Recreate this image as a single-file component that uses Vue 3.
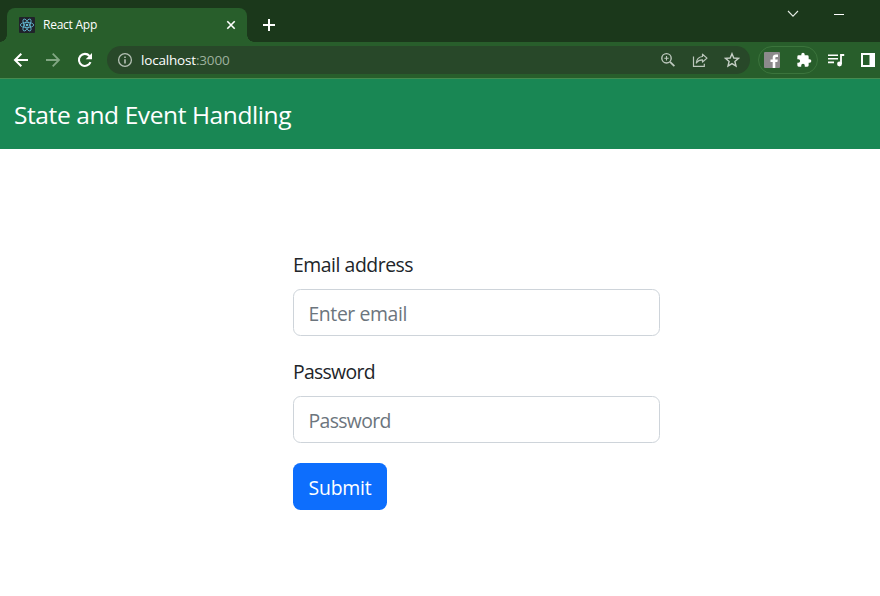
<script setup>
import { ref } from 'vue'

const email = ref('')
const password = ref('')
</script>

<template>
  <div class="window">
    <div class="tabstrip">
      <div class="tab">
        <svg class="favicon" width="16" height="16" viewBox="0 0 16 16">
          <rect width="16" height="16" rx="1" fill="#20232a" />
          <g fill="none" stroke="#61b9d3" stroke-width="0.85">
            <ellipse cx="8" cy="8" rx="6.7" ry="2.6" />
            <ellipse cx="8" cy="8" rx="6.7" ry="2.6" transform="rotate(60 8 8)" />
            <ellipse cx="8" cy="8" rx="6.7" ry="2.6" transform="rotate(120 8 8)" />
          </g>
          <circle cx="8" cy="8" r="1.3" fill="#61b9d3" />
        </svg>
        <span class="tab-title">React App</span>
        <svg class="tab-close" width="10" height="10" viewBox="0 0 10 10">
          <path d="M1.3 1.3 8.7 8.7M8.7 1.3 1.3 8.7" stroke="#fff" stroke-width="1.6" />
        </svg>
      </div>
      <svg class="new-tab" width="14" height="14" viewBox="0 0 14 14">
        <path d="M7 1v12M1 7h12" stroke="#fff" stroke-width="2" />
      </svg>
      <div class="controls">
        <svg width="12" height="8" viewBox="0 0 12 8">
          <path d="M1 1 6 6.2 11 1" fill="none" stroke="#e6ece6" stroke-width="1.1" />
        </svg>
        <svg width="10" height="8" viewBox="0 0 10 8">
          <path d="M0 4.5h10" stroke="#fff" stroke-width="1" />
        </svg>
      </div>
    </div>

    <div class="toolbar">
      <div class="nav">
        <svg width="16" height="16" viewBox="0 0 16 16">
          <path d="M15 8H2.5M8.3 1.7 2 8l6.3 6.3" fill="none" stroke="#fff" stroke-width="2" />
        </svg>
        <svg width="16" height="16" viewBox="0 0 16 16">
          <path d="M1 8h12.5M7.7 1.7 14 8l-6.3 6.3" fill="none" stroke="#82a783" stroke-width="1.8" />
        </svg>
        <svg width="16" height="16" viewBox="0 0 16 16">
          <path d="M13.5 10.2A6 6 0 1 1 12.5 4" fill="none" stroke="#fff" stroke-width="2.1" />
          <path d="M15 1v6.3H8.7z" fill="#fff" />
        </svg>
      </div>
      <div class="omnibox">
        <svg width="16" height="16" viewBox="0 0 16 16">
          <circle cx="8" cy="8" r="6.4" fill="none" stroke="#b4c0b4" stroke-width="1.3" />
          <path d="M8 7.2v4.3M8 4.4V6" stroke="#b4c0b4" stroke-width="1.6" />
        </svg>
        <span class="url"><b>localhost</b>:3000</span>
        <div class="actions">
          <svg width="16" height="16" viewBox="0 0 16 16" fill="none" stroke="#bdc8bd">
            <circle cx="6.5" cy="6.3" r="4.7" stroke-width="1.4" />
            <path d="M10 9.8 14.4 14.2" stroke-width="1.8" />
            <path d="M6.5 4.1v4.4M4.3 6.3h4.4" stroke-width="1.1" />
          </svg>
          <svg width="16" height="16" viewBox="0 0 16 16" fill="none" stroke="#bdc8bd" stroke-width="1.2">
            <path d="M1.500 4.500V14.300h10.800v-2.600" />
            <path d="M10.500 2.200 15 6.100 10.500 10V7.800C7.500 7.700 5.800 8.700 4.300 11 4.700 7.300 6.700 4.900 10.500 4.500z" stroke-linejoin="round" />
          </svg>
          <svg width="16" height="16" viewBox="0 0 16 16">
            <path d="M8 1.7 9.8 6l4.7.4-3.6 3 1.1 4.7L8 11.6 4 14.1l1.1-4.7-3.6-3L6.200 6z" fill="none" stroke="#c6cfc6" stroke-width="1.4" />
          </svg>
        </div>
      </div>
      <div class="extensions">
        <svg width="16" height="16" viewBox="0 0 16 16">
          <rect width="16" height="16" rx="1" fill="#8c8a8c" />
          <path d="M8.700 16V10H6.500V7.500H8.700V5.800C8.700 3.500 10 2.500 12 2.500H14V5H12.600C11.600 5 11.300 5.400 11.300 6.200V7.500H13.800L13.400 10H11.300V16Z" fill="#fff" />
        </svg>
        <svg width="16" height="16" viewBox="0 0 24 24">
          <path d="M20.500 11H19V7a2 2 0 0 0-2-2h-4V3.500a2.500 2.500 0 0 0-5 0V5H4a2 2 0 0 0-2 2v3.800h1.500a2.700 2.700 0 0 1 0 5.400H2V20a2 2 0 0 0 2 2h3.800v-1.500a2.700 2.700 0 0 1 5.400 0V22H17a2 2 0 0 0 2-2v-4h1.500a2.500 2.500 0 0 0 0-5z" fill="#fff" />
        </svg>
      </div>
      <div class="tools">
        <svg width="18" height="16" viewBox="0 0 18 16">
          <path d="M0 3.200h10M0 6.800h10M0 10.400h6" stroke="#fff" stroke-width="1.600" />
          <path d="M13 12V3h3.200" fill="none" stroke="#fff" stroke-width="1.800" />
          <circle cx="11.500" cy="12" r="2.400" fill="#fff" />
        </svg>
        <svg width="14" height="14" viewBox="0 0 14 14">
          <path d="M1 1h12v12H1z" fill="none" stroke="#fff" stroke-width="2" />
          <path d="M8.500 1H13v12H8.500z" fill="#fff" />
        </svg>
      </div>
    </div>

    <header class="navbar">
      <span class="brand">State and Event Handling</span>
    </header>

    <form class="form" @submit.prevent>
      <label class="label label-email" for="email">Email address</label>
      <input id="email" v-model="email" class="input input-email" type="email" placeholder="Enter email" />
      <label class="label label-password" for="password">Password</label>
      <input id="password" v-model="password" class="input input-password" type="password" placeholder="Password" />
      <button class="submit" type="submit">Submit</button>
    </form>
  </div>
</template>

<style>
body {
  margin: 0;
  background: #fff;
}
</style>

<style scoped>
.window {
  width: 880px;
  height: 596px;
  overflow: hidden;
  background: #fff;
  font-family: "Open Sans", "Noto Sans", sans-serif;
}
.window * {
  box-sizing: border-box;
}
svg {
  display: block;
  flex: none;
}
.tabstrip {
  display: flex;
  height: 42px;
  padding: 8px 36px 0 7px;
  background: #1b381b;
}
.tab {
  position: relative;
  display: flex;
  align-items: center;
  width: 240px;
  height: 34px;
  padding: 0 11px 0 12px;
  border-radius: 8px 8px 0 0;
  background: #285e2b;
}
.tab::before,
.tab::after {
  content: "";
  position: absolute;
  bottom: 0;
  width: 7px;
  height: 7px;
}
.tab::before {
  left: -7px;
  background: radial-gradient(circle at 0 0, #1b381b 6.5px, #285e2b 7px);
}
.tab::after {
  right: -7px;
  background: radial-gradient(circle at 100% 0, #1b381b 6.5px, #285e2b 7px);
}
.tab-title {
  margin-left: 8px;
  color: #fff;
  font-size: 12px;
  line-height: 16px;
  letter-spacing: -0.25px;
}
.tab-close {
  margin-left: auto;
}
.new-tab {
  margin: 10px 0 0 15px;
}
.controls {
  display: flex;
  gap: 35px;
  margin: 2px 0 0 auto;
}
.toolbar {
  display: flex;
  align-items: center;
  height: 37px;
  padding: 0 5px 0 13px;
  background: #285e2b;
  border-bottom: 1px solid #468b50;
}
.nav {
  display: flex;
  gap: 16px;
}
.omnibox {
  display: flex;
  align-items: center;
  width: 643px;
  height: 28px;
  margin-left: 14px;
  padding: 0 10px;
  border-radius: 14px;
  background: #284829;
}
.url {
  margin-left: 8px;
  color: #9db09d;
  font-size: 13.5px;
  line-height: 20px;
  letter-spacing: -0.18px;
}
.url b {
  color: #fff;
  font-weight: 400;
}
.actions {
  display: flex;
  gap: 16px;
  margin-left: auto;
}
.extensions {
  display: flex;
  align-items: center;
  gap: 16px;
  width: 60px;
  height: 28px;
  margin-left: 8px;
  padding: 0 5px;
  border: 1px solid #3b743c;
  border-radius: 14px;
}
.tools {
  display: flex;
  align-items: center;
  gap: 15px;
  margin-left: 10px;
}
.navbar {
  display: flex;
  align-items: center;
  height: 70px;
  padding: 2px 14px 0;
  background: #198754;
}
.brand {
  color: #fff;
  font-size: 24.5px;
  line-height: 36px;
  letter-spacing: -0.4px;
}
.form {
  display: flex;
  flex-direction: column;
  width: 367px;
  margin: 101px 0 0 293px;
}
.label {
  height: 30px;
  color: #212529;
  font-size: 19.4px;
  line-height: 30px;
  letter-spacing: -0.46px;
}
.label-password {
  letter-spacing: -0.7px;
}
.input {
  height: 47px;
  margin: 9px 0 21px;
  padding: 2px 14.5px 0;
  border: 1px solid #ced4da;
  border-radius: 7.5px;
  outline: none;
  background: #fff;
  color: #212529;
  font-family: inherit;
  font-size: 19.4px;
  letter-spacing: -0.4px;
}
.input-password {
  margin-bottom: 20px;
  letter-spacing: -0.65px;
}
.input::placeholder {
  color: #6c757d;
  opacity: 1;
}
.submit {
  align-self: flex-start;
  width: 94px;
  height: 47px;
  padding: 1px 0 0;
  border: 0;
  border-radius: 7.5px;
  background: #0d6efd;
  color: #fff;
  font-family: inherit;
  font-size: 19.4px;
  letter-spacing: -0.2px;
}
</style>
